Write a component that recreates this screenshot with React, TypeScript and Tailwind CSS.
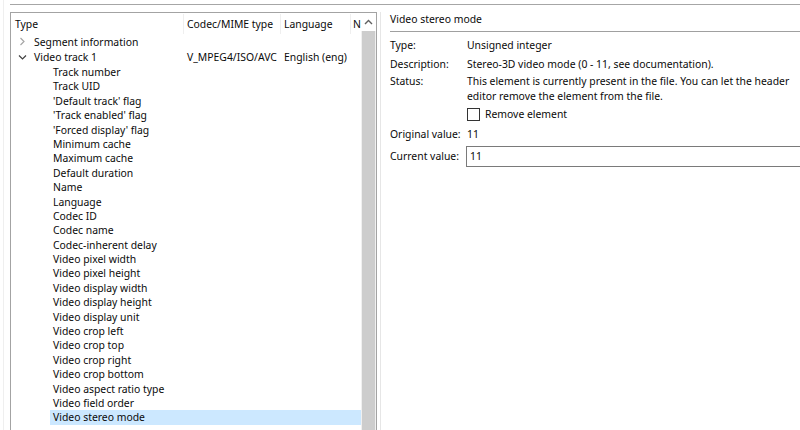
import React from 'react'

const children = [
  'Track number',
  'Track UID',
  "'Default track' flag",
  "'Track enabled' flag",
  "'Forced display' flag",
  'Minimum cache',
  'Maximum cache',
  'Default duration',
  'Name',
  'Language',
  'Codec ID',
  'Codec name',
  'Codec-inherent delay',
  'Video pixel width',
  'Video pixel height',
  'Video display width',
  'Video display height',
  'Video display unit',
  'Video crop left',
  'Video crop top',
  'Video crop right',
  'Video crop bottom',
  'Video aspect ratio type',
  'Video field order',
  'Video stereo mode',
]

function Chevron({ open }: { open: boolean }) {
  return open ? (
    <svg width="9" height="9" viewBox="0 0 9 9" className="text-[#404040]">
      <path d="M1 2.5 L4.5 6 L8 2.5" fill="none" stroke="currentColor" strokeWidth="1.2" />
    </svg>
  ) : (
    <svg width="9" height="9" viewBox="0 0 9 9" className="text-[#a6a6a6]">
      <path d="M2.5 1 L6 4.5 L2.5 8" fill="none" stroke="currentColor" strokeWidth="1.2" />
    </svg>
  )
}

function TreePanel() {
  return (
    <div className="flex w-[367px] h-[440px] border border-[#a3a3a3] bg-white">
      <div className="flex-1 flex flex-col overflow-hidden">
        {/* header */}
        <div className="flex h-[21px] items-center shrink-0 pt-[1px]">
          <div className="w-[173px] pl-[4px] border-r border-[#efefef] h-full flex items-center">Type</div>
          <div className="w-[97px] pl-[3px] border-r border-[#efefef] h-full flex items-center">Codec/MIME type</div>
          <div className="w-[70px] pl-[3px] border-r border-[#efefef] h-full flex items-center">Language</div>
          <div className="flex-1 pl-[2px] h-full flex items-center overflow-hidden">N</div>
        </div>
        {/* top level rows */}
        <div className="flex h-[15.5px] items-center">
          <div className="w-[173px] flex items-center">
            <span className="w-[23px] flex justify-center"><Chevron open={false} /></span>
            <span>Segment information</span>
          </div>
        </div>
        <div className="flex h-[15.5px] items-center">
          <div className="w-[173px] flex items-center">
            <span className="w-[23px] flex justify-center"><Chevron open={true} /></span>
            <span>Video track 1</span>
          </div>
          <div className="w-[97px] pl-[3px] whitespace-nowrap">V_MPEG4/ISO/AVC</div>
          <div className="w-[70px] pl-[3px] whitespace-nowrap">English (eng)</div>
        </div>
        {children.map((c, i) => (
          <div
            key={c}
            className={
              'h-[14.4px] flex items-center ml-[39px] pl-[3px] whitespace-nowrap ' +
              (i === children.length - 1 ? 'bg-[#cce8ff]' : '')
            }
          >
            {c}
          </div>
        ))}
      </div>
      {/* scrollbar */}
      <div className="w-[15px] bg-[#f0f0f0] flex flex-col">
        <div className="h-[18px] bg-white flex items-center justify-center">
          <svg width="9" height="6" viewBox="0 0 9 6">
            <path d="M1 5 L4.5 1.5 L8 5" fill="none" stroke="#606060" strokeWidth="1.4" />
          </svg>
        </div>
        <div className="flex-1 mx-[1px] bg-[#cdcdcd]" />
      </div>
    </div>
  )
}

function InfoRow({ label, children }: { label: string; children: React.ReactNode }) {
  return (
    <div className="flex w-full">
      <div className="w-[77px] shrink-0">{label}</div>
      <div className="flex-1">{children}</div>
    </div>
  )
}

function DetailPanel() {
  return (
    <div className="flex-1 ml-[3px] border-l border-[#e6e6e6] pl-[9px]">
      <div className="h-[14px] flex items-center">Video stereo mode</div>
      <div className="mt-[5px] border-t border-[#a0a0a0]" />
      <div className="mt-[6px] flex flex-col">
        <div className="h-[15px] flex items-center">
          <InfoRow label="Type:">Unsigned integer</InfoRow>
        </div>
        <div className="h-[15px] mt-[4px] flex items-center">
          <InfoRow label="Description:">Stereo-3D video mode (0 - 11, see documentation).</InfoRow>
        </div>
        <div className="mt-[2px] leading-[15px]">
          <InfoRow label="Status:">
            This element is currently present in the file. You can let the header editor remove the element from the file.
          </InfoRow>
        </div>
        <div className="flex items-center h-[18px] mt-[1px] pl-[77px]">
          <span className="w-[13px] h-[13px] border border-[#333333] bg-white" />
          <span className="ml-[5px]">Remove element</span>
        </div>
        <div className="h-[15px] mt-[4px] flex items-center">
          <InfoRow label="Original value:">11</InfoRow>
        </div>
        <div className="flex items-center mt-[4px]">
          <div className="w-[76px] shrink-0">Current value:</div>
          <div className="flex-1 h-[21px] border border-[#7a7a7a] border-r-0 flex items-center pl-[3px]">11</div>
        </div>
      </div>
    </div>
  )
}

export default function App() {
  return (
    <div className="w-[800px] h-[430px] overflow-hidden bg-white text-[#0a0a0a] text-[10.4px] font-['Noto_Sans',sans-serif] leading-none pl-[3px]">
      <div className="h-full border-l border-[#efefef] pl-[6px] pt-[4px]">
        <div className="border-t border-[#a6a6a6]" />
        <div className="flex pt-[7px]">
          <TreePanel />
          <DetailPanel />
        </div>
      </div>
    </div>
  )
}
